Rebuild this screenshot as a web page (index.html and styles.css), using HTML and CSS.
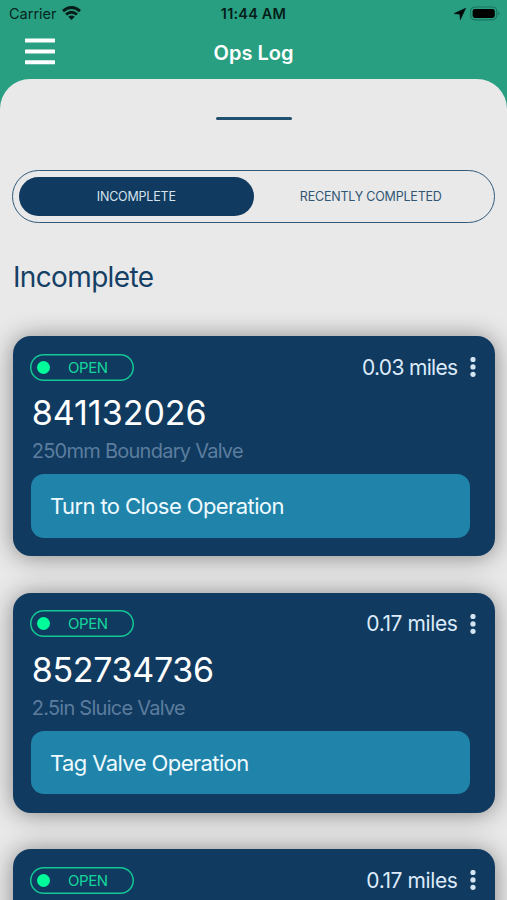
FILE: index.html
```html
<!DOCTYPE html>
<html lang="en">
<head>
<meta charset="utf-8">
<title>Ops Log</title>
<link rel="stylesheet" href="styles.css">
</head>
<body>
<header class="top">
  <div class="status">
    <div class="carrier"><span>Carrier</span>
      <svg width="19" height="14" viewBox="0 0 19 14" fill="none" stroke="#061c18" stroke-width="2.900"><path d="M1 5.200Q9.500-2.200 18 5.200"/><path d="M4 8.500Q9.500 3.800 15 8.500"/><path d="M6.300 10.700Q9.500 8.300 12.700 10.700L9.500 13.900Z" fill="#061c18" stroke="none"/></svg>
    </div>
    <div class="time">11:44 AM</div>
    <div class="power">
      <svg width="12" height="12" viewBox="0 0 12 12"><path d="M11.700.2L0 5.600L5.800 6.200L6.300 11.800Z" fill="#020807" stroke="#020807" stroke-width=".5"/></svg>
      <svg width="31" height="15" viewBox="0 0 31 15"><rect x=".7" y="1" width="26" height="12.800" rx="4" fill="none" stroke="#1b7560" stroke-width="1.200"/><rect x="2.600" y="2.900" width="22.200" height="9" rx="2.300" fill="#000"/><path d="M28.200 5.200Q31 7.300 28.200 9.500Z" fill="#1b7560"/></svg>
    </div>
  </div>
  <nav class="nav">
    <svg class="menu" width="30" height="27" viewBox="0 0 30 27" fill="#fff"><rect y=".5" width="30" height="4" rx=".6"/><rect y="11.400" width="30" height="4" rx=".6"/><rect y="22.300" width="30" height="4" rx=".6"/></svg>
    <h1>Ops Log</h1>
  </nav>
</header>
<main class="sheet">
  <div class="handle"></div>
  <div class="segments">
    <div class="segment active"><span>INCOMPLETE</span></div>
    <div class="segment"><span>RECENTLY COMPLETED</span></div>
  </div>
  <h2>Incomplete</h2>
  <section class="list">
    <article class="card">
      <div class="row">
        <div class="badge"><i class="dot"></i><span>OPEN</span></div>
        <div class="distance"><span class="near">0.03 miles</span><svg width="6" height="20" viewBox="0 0 6 20" fill="#d5e4f3"><circle cx="3" cy="2.500" r="2.600"/><circle cx="3" cy="9.900" r="2.600"/><circle cx="3" cy="17.300" r="2.600"/></svg></div>
      </div>
      <div class="number">841132026</div>
      <div class="kind">250mm Boundary Valve</div>
      <div class="operation">Turn to Close Operation</div>
    </article>
    <article class="card">
      <div class="row">
        <div class="badge"><i class="dot"></i><span>OPEN</span></div>
        <div class="distance"><span>0.17 miles</span><svg width="6" height="20" viewBox="0 0 6 20" fill="#d5e4f3"><circle cx="3" cy="2.500" r="2.600"/><circle cx="3" cy="9.900" r="2.600"/><circle cx="3" cy="17.300" r="2.600"/></svg></div>
      </div>
      <div class="number tight">852734736</div>
      <div class="kind">2.5in Sluice Valve</div>
      <div class="operation">Tag Valve Operation</div>
    </article>
    <article class="card">
      <div class="row">
        <div class="badge"><i class="dot"></i><span>OPEN</span></div>
        <div class="distance"><span>0.17 miles</span><svg width="6" height="20" viewBox="0 0 6 20" fill="#d5e4f3"><circle cx="3" cy="2.500" r="2.600"/><circle cx="3" cy="9.900" r="2.600"/><circle cx="3" cy="17.300" r="2.600"/></svg></div>
      </div>
    </article>
  </section>
</main>
</body>
</html>
```
FILE: styles.css
```css
* { box-sizing: border-box; }
body {
  margin: 0;
  height: 900px;
  overflow: hidden;
  display: flex;
  flex-direction: column;
  background: #299f82;
  font-family: Inter, "Liberation Sans", sans-serif;
  white-space: nowrap;
}
svg { display: block; flex: none; }
.top { height: 79px; flex: none; }
.status {
  height: 27px;
  display: grid;
  grid-template-columns: 1fr auto 1fr;
  align-items: center;
  padding: 0 6px 0 9px;
  color: #06251e;
  font-size: 14.5px;
}
.carrier { display: flex; align-items: center; gap: 5px; }
.carrier svg { margin-top: -1px; }
.time { font-weight: 600; letter-spacing: .2px; margin-right: 3px; color: #051d18; }
.power { display: flex; align-items: center; justify-content: flex-end; gap: 4px; }
.nav {
  height: 50px;
  display: grid;
  grid-template-columns: 1fr auto 1fr;
  align-items: center;
  padding: 0 25px;
}
.menu { margin-top: -2px; }
h1 { margin: 1px 0 0; color: #fff; font-size: 20px; font-weight: 600; line-height: 26px; }
.sheet {
  flex: 1;
  min-height: 0;
  overflow: hidden;
  background: #e9e9e9;
  border-radius: 30px 30px 0 0;
  padding: 38px 12px 0;
}
.handle { width: 76px; height: 3px; margin: 0 auto; border-radius: 2px; background: #22506f; }
.segments {
  height: 53px;
  margin-top: 50px;
  border: 1px solid #315a7a;
  border-radius: 27px;
  padding: 6px;
  display: grid;
  grid-template-columns: 1fr 1fr;
}
.segment {
  display: flex;
  align-items: center;
  justify-content: center;
  border-radius: 20px;
  color: #305674;
  font-size: 12.5px;
  letter-spacing: -.2px;
}
.active { background: #103a5f; color: #d6e3ee; }
h2 {
  margin: 36px 0 0 1px;
  height: 36px;
  color: #153f65;
  font-size: 28px;
  line-height: 36px;
  font-weight: 400;
  letter-spacing: -.65px;
}
.list { margin: 41.200px 0 0 1px; display: flex; flex-direction: column; gap: 36.600px; }
.card {
  width: 482px;
  height: 220px;
  flex: none;
  padding: 17px 18px 18px;
  border-radius: 18px;
  background: #103a5f;
  box-shadow: 0 1px 24px rgba(0, 0, 0, .43);
}
.row { height: 28px; display: flex; align-items: center; justify-content: space-between; margin: 0 1px 0 -1px; }
.badge {
  width: 104px;
  height: 27px;
  box-shadow: inset 0 0 0 1.500px #14c795;
  border-radius: 14px;
  display: flex;
  align-items: center;
  padding-left: 7px;
  color: #14d69b;
  font-size: 15px;
  letter-spacing: -.4px;
}
.dot { width: 13px; height: 13px; border-radius: 50%; background: #00fb9b; margin-right: 18px; }
.distance {
  display: flex;
  align-items: center;
  gap: 12.500px;
  color: #dceafa;
  font-size: 21px;
  letter-spacing: -.4px;
}
.near { letter-spacing: -.67px; }
.number { height: 46px; margin: 9px 0 0 .7px; color: #fff; font-size: 34px; line-height: 46px; }
.tight { letter-spacing: -.3px; }
.kind {
  height: 26px;
  margin: 2px 0 0 .7px;
  color: #5c7d9e;
  font-size: 20px;
  line-height: 26px;
  letter-spacing: -.74px;
}
.operation {
  width: 439px;
  height: 63.500px;
  margin-top: 10px;
  border-radius: 13px;
  padding-left: 19px;
  display: flex;
  align-items: center;
  background: #2084aa;
  color: #eefaff;
  font-size: 22px;
  letter-spacing: -.59px;
}
```
